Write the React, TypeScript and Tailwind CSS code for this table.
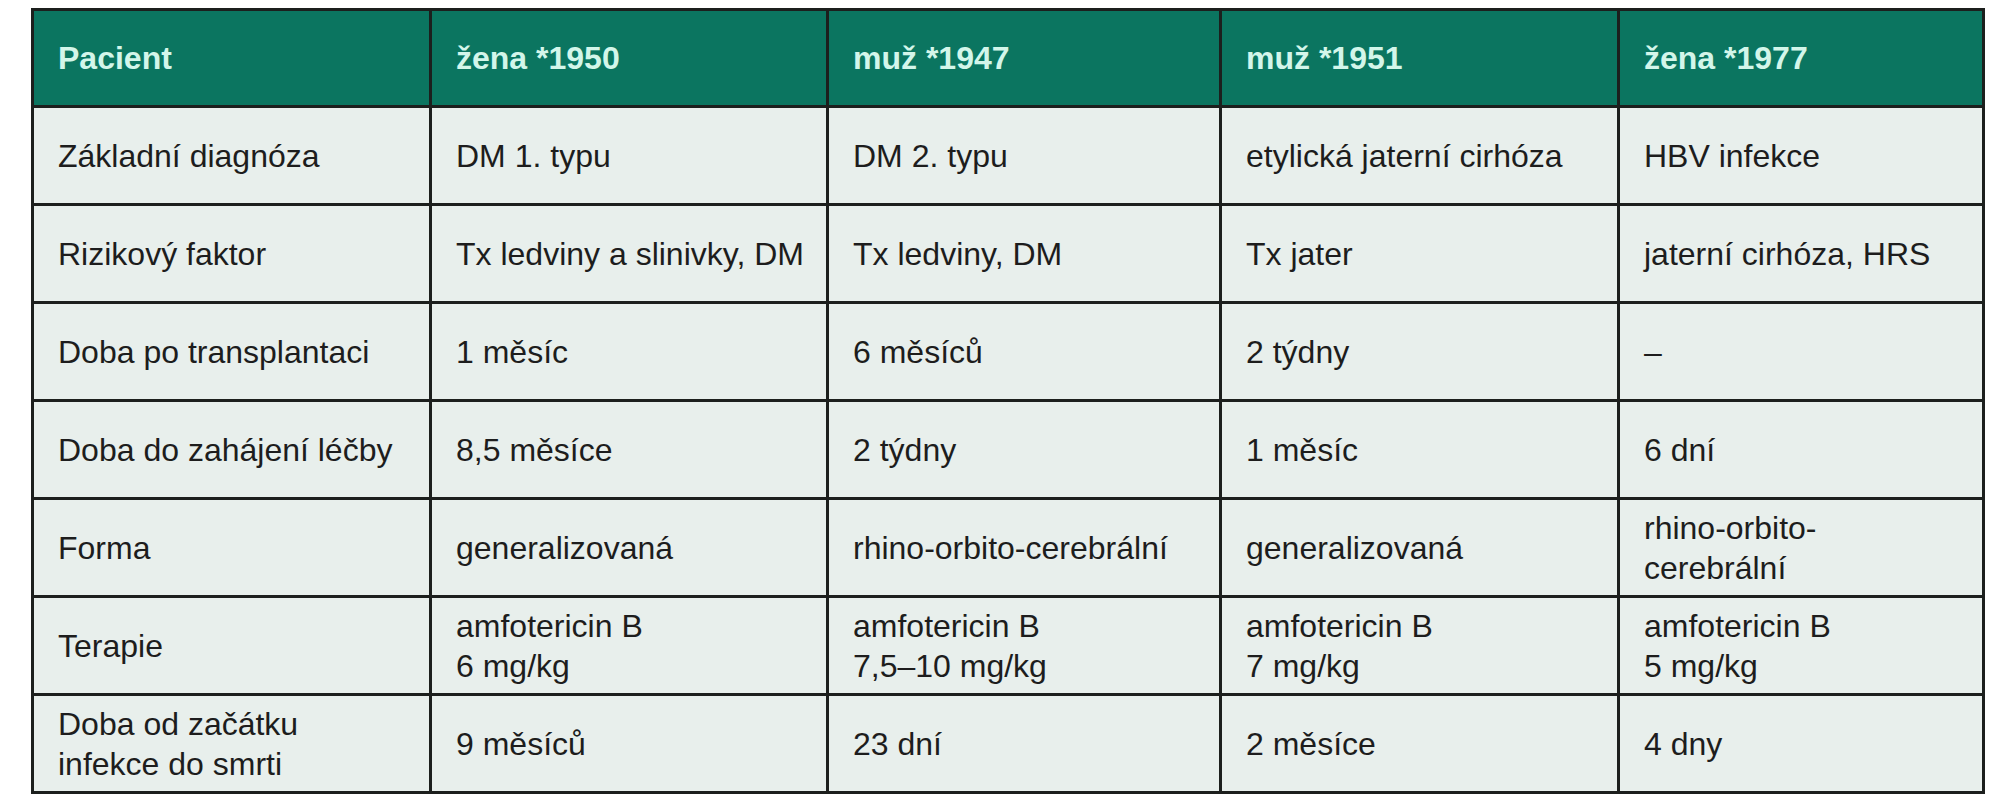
import React from "react";

const header = ["Pacient", "žena *1950", "muž *1947", "muž *1951", "žena *1977"];

const rows: React.ReactNode[][] = [
  ["Základní diagnóza", "DM 1. typu", "DM 2. typu", "etylická jaterní cirhóza", "HBV infekce"],
  ["Rizikový faktor", "Tx ledviny a slinivky, DM", "Tx ledviny, DM", "Tx jater", "jaterní cirhóza, HRS"],
  ["Doba po transplantaci", "1 měsíc", "6 měsíců", "2 týdny", "–"],
  ["Doba do zahájení léčby", "8,5 měsíce", "2 týdny", "1 měsíc", "6 dní"],
  [
    "Forma",
    "generalizovaná",
    "rhino-orbito-cerebrální",
    "generalizovaná",
    <>
      rhino-orbito-
      <br />
      cerebrální
    </>,
  ],
  [
    "Terapie",
    <>
      amfotericin B
      <br />6 mg/kg
    </>,
    <>
      amfotericin B
      <br />
      7,5–10 mg/kg
    </>,
    <>
      amfotericin B
      <br />7 mg/kg
    </>,
    <>
      amfotericin B
      <br />5 mg/kg
    </>,
  ],
  [
    <>
      Doba od začátku
      <br />
      infekce do smrti
    </>,
    "9 měsíců",
    "23 dní",
    "2 měsíce",
    "4 dny",
  ],
];

export default function App() {
  return (
    <div className="w-[2000px] h-[800px] bg-white pt-[8px] pl-[31px] font-['Liberation_Sans',Arial,sans-serif]">
      <div className="inline-grid grid-cols-[395px_394px_390px_395px_362px] grid-rows-[94px_repeat(7,95px)] gap-[3px] p-[3px] bg-[#1c1f1d]">
        {header.map((h) => (
          <div
            key={h}
            className="flex items-center pl-[24px] bg-[#0b7560] text-[#d3f6ea] text-[32px] font-bold leading-[40px]"
          >
            {h}
          </div>
        ))}
        {rows.map((row, i) =>
          row.map((cell, j) => (
            <div
              key={`${i}-${j}`}
              className="flex items-center pl-[24px] pr-[8px] bg-[#e8efec] text-[#1d1d1d] text-[32px] leading-[40px]"
            >
              <span>{cell}</span>
            </div>
          ))
        )}
      </div>
    </div>
  );
}
